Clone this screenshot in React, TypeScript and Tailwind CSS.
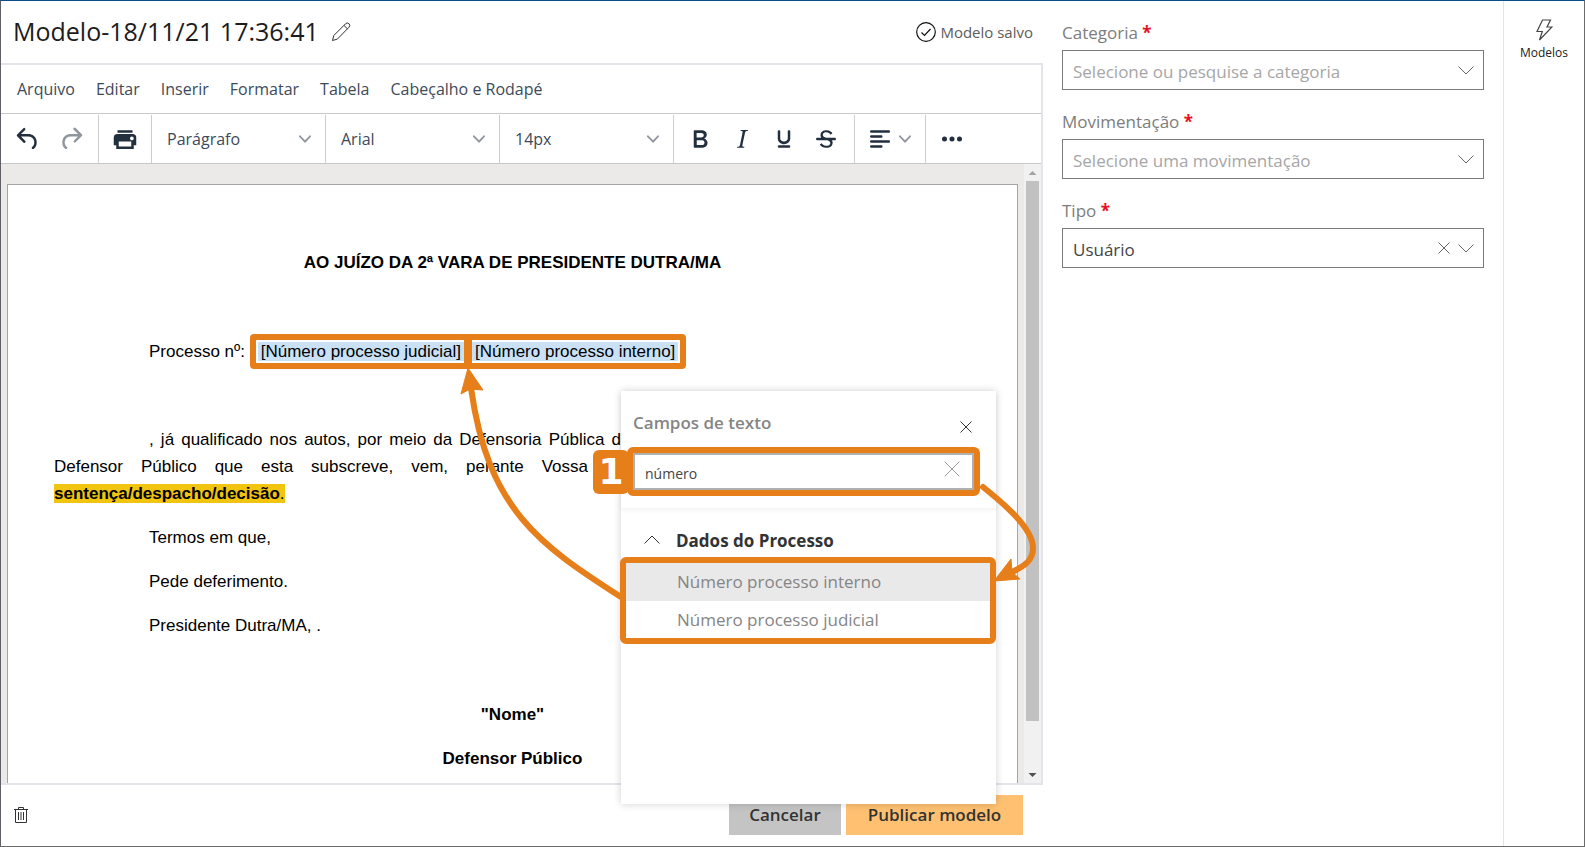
import type { ReactNode } from 'react';

const menuItems = ['Arquivo', 'Editar', 'Inserir', 'Formatar', 'Tabela', 'Cabeçalho e Rodapé'];

const icons = {
  undo: 'M6.4 8H12c3.7 0 6.2 2 6.8 5.1.6 2.7-.4 5.6-2.3 6.8a1 1 0 01-1-1.8c1.1-.6 1.8-2.7 1.4-4.6-.5-2.1-2.1-3.5-4.9-3.5H6.4l3.3 3.3a1 1 0 11-1.4 1.4l-5-5a1 1 0 010-1.4l5-5a1 1 0 011.4 1.4L6.4 8z',
  redo: 'M17.6 10H12c-2.8 0-4.4 1.4-4.9 3.5-.4 2 .3 4 1.4 4.6a1 1 0 11-1 1.8c-2-1.2-2.9-4.1-2.3-6.8.6-3 3-5.1 6.8-5.1h5.6l-3.3-3.3a1 1 0 111.4-1.4l5 5a1 1 0 010 1.4l-5 5a1 1 0 01-1.4-1.4l3.3-3.3z',
  print: 'M18 8H6a3 3 0 00-3 3v6h2v3h14v-3h2v-6a3 3 0 00-3-3zm-1 10H7v-4h10v4zm.5-5c-.8 0-1.5-.7-1.5-1.5s.7-1.5 1.5-1.5 1.5.7 1.5 1.5-.7 1.5-1.5 1.5zm.5-8H6v2h12V5z',
  bold: 'M7.8 19c-.3 0-.5 0-.6-.2l-.2-.5V5.7c0-.2 0-.4.2-.5l.6-.2h5c1.5 0 2.7.3 3.5 1 .7.6 1.1 1.4 1.1 2.5a3 3 0 01-.6 1.9c-.4.6-1 1-1.6 1.2.4.1.9.3 1.3.6s.8.7 1 1.2c.4.4.5 1 .5 1.6 0 1.3-.4 2.3-1.3 3-.8.7-2.1 1-3.8 1H7.8zm5-8.3c.6 0 1.2-.1 1.6-.5.4-.3.6-.7.6-1.3 0-1.1-.8-1.7-2.3-1.7H9.3v3.5h3.4zm.5 6c.7 0 1.3-.1 1.7-.4.4-.4.6-.9.6-1.5s-.2-1-.7-1.4c-.4-.3-1-.4-2-.4H9.4v3.8h4z',
  italic: 'M16.7 4.7l-.1.9h-.3c-.6 0-1 0-1.4.3-.3.3-.4.6-.5 1.1l-2.1 9.8v.6c0 .5.4.8 1.4.8h.2l-.2.8H8l.2-.8h.2c1.1 0 1.8-.5 2-1.5l2-9.8.1-.5c0-.6-.4-.8-1.4-.8h-.3l.2-.9h5.8z',
  underline: 'M16 5c.6 0 1 .4 1 1v5.5a4 4 0 01-.4 1.8l-1 1.4a5.3 5.3 0 01-5.5 1 5 5 0 01-1.6-1c-.5-.4-.8-.9-1.1-1.4a4 4 0 01-.4-1.8V6c0-.6.4-1 1-1s1 .4 1 1v5.5c0 .3 0 .6.2 1l.6.7a3.3 3.3 0 002.2.8 3.4 3.4 0 002.2-.8c.3-.2.4-.5.6-.8l.2-.9V6c0-.6.4-1 1-1zM8 17h8c.6 0 1 .4 1 1s-.4 1-1 1H8a1 1 0 010-2z',
  strike: 'M15.6 8.5c-.5-.7-1-1.1-1.3-1.3-.6-.4-1.3-.6-2-.6-2.7 0-2.8 1.7-2.8 2.1 0 1.6 1.8 2 3.2 2.3 4.4.9 4.6 2.8 4.6 3.9 0 1.4-.7 4.1-5 4.1A6.2 6.2 0 017 16.4l1.5-1.1c.4.6 1.6 2 3.7 2 1.6 0 2.5-.4 3-1.2.4-.8.3-2-.8-2.6-.7-.4-1.6-.7-2.9-1-1-.2-3.9-.8-3.9-3.6C7.6 6 10.3 5 12.4 5c2.9 0 4.2 1.6 4.7 2.4l-1.5 1.1zM5 11h14a1 1 0 010 2H5a1 1 0 010-2z',
  alignLeft: 'M5 5h14c.6 0 1 .4 1 1s-.4 1-1 1H5a1 1 0 110-2zm0 4h8c.6 0 1 .4 1 1s-.4 1-1 1H5a1 1 0 110-2zm0 8h8c.6 0 1 .4 1 1s-.4 1-1 1H5a1 1 0 010-2zm0-4h14c.6 0 1 .4 1 1s-.4 1-1 1H5a1 1 0 010-2z',
  more: 'M6 10a2 2 0 100 4 2 2 0 000-4zm6 0a2 2 0 100 4 2 2 0 000-4zm6 0a2 2 0 100 4 2 2 0 000-4z',
};

const Icon = ({ name }: { name: keyof typeof icons }) => (
  <svg viewBox="0 0 24 24" className="size-[30px] shrink-0" fill="currentColor">
    <path d={icons[name]} />
  </svg>
);

const ToolChevron = () => (
  <svg viewBox="0 0 10 10" className="size-3 shrink-0 text-[#8f96a0]" fill="currentColor">
    <path d="M8.7 2.2c.3-.3.8-.3 1 0 .4.4.4.9 0 1.2L5.7 7.8c-.3.3-.9.3-1.2 0L.2 3.4a.8.8 0 010-1.2c.3-.3.8-.3 1.1 0L5 6l3.7-3.8z" />
  </svg>
);

const Cross = ({ className }: { className: string }) => (
  <svg viewBox="0 0 12 12" className={className} fill="none" stroke="currentColor">
    <path d="M.5.5l11 11M11.5.5l-11 11" vectorEffect="non-scaling-stroke" />
  </svg>
);

const ToolButton = ({ name, label, className = '' }: { name: keyof typeof icons; label: string; className?: string }) => (
  <button type="button" aria-label={label} className={`flex h-12 w-[42px] items-center justify-center ${className}`}>
    <Icon name={name} />
  </button>
);

const ToolGroup = ({ children, className = '' }: { children: ReactNode; className?: string }) => (
  <div className={`flex h-12 items-center border-r border-[#cccccc] ${className}`}>{children}</div>
);

const ToolSelect = ({ label, value }: { label: string; value: string }) => (
  <div className="relative flex h-12 w-[174px] items-center border-r border-[#cccccc]">
    <select aria-label={label} className="h-full w-full appearance-none bg-transparent pl-[15px] text-base text-[#3d4a5a] outline-none">
      <option>{value}</option>
    </select>
    <span className="pointer-events-none absolute right-3.5"><ToolChevron /></span>
  </div>
);

const Field = ({ id, label, value, filled = false }: { id: string; label: string; value: string; filled?: boolean }) => (
  <div className="flex flex-col gap-[5px]">
    <label htmlFor={id} className="text-[17px] leading-6 text-[#7d7d7d]">
      {label} <span className="font-bold text-[#e81123]">*</span>
    </label>
    <div className="relative flex items-center">
      <select
        id={id}
        className={`h-10 w-full appearance-none border border-[#7a7a7a] bg-white px-2.5 pt-1 text-[17px] outline-none ${filled ? 'text-[#444444]' : 'text-[#a6a6a6]'}`}
      >
        <option>{value}</option>
      </select>
      <span className="pointer-events-none absolute right-2.5 flex items-center gap-2 text-[#666666]">
        {filled && <Cross className="size-3" />}
        <svg viewBox="0 0 16 9" className="h-[9px] w-4" fill="none" stroke="currentColor">
          <path d="M.5.5L8 8 15.5.5" />
        </svg>
      </span>
    </div>
  </div>
);

const Token = ({ children }: { children: ReactNode }) => (
  <span className="relative ml-2 bg-[#c9e0f5] px-[3px]">
    {children}
    <span className="absolute -inset-2 rounded-sm border-6 border-[#e67e1a]" />
  </span>
);

const DocumentPage = () => (
  <article className="mt-5 mr-1.5 ml-1.5 flex-1 border border-b-0 border-[#a5a5a5] bg-white px-[46px] pt-16 font-['Liberation_Sans',Arial,sans-serif] text-[17px] leading-[27px] text-black">
    <div className="flex flex-col gap-[17px]">
      <h2 className="text-center font-bold">AO JUÍZO DA 2ª VARA DE PRESIDENTE DUTRA/MA</h2>
      <div className="h-7" />
      <p className="indent-[95px] whitespace-nowrap">
        Processo nº:{' '}
        <Token>[Número processo judicial]</Token>
        <Token>[Número processo interno]</Token>
      </p>
      <div className="h-[27px]" />
      <p>
        <span className="block w-[567px] indent-[95px] [text-align-last:justify]">
          , já qualificado nos autos, por meio da Defensoria Pública d
        </span>
        <span className="block w-[534px] [text-align-last:justify]">
          Defensor Público que esta subscreve, vem, perante Vossa
        </span>
        <span className="bg-[#f1c40f]"><strong>sentença/despacho/decisão</strong>.</span>
      </p>
      <p className="indent-[95px]">Termos em que,</p>
      <p className="indent-[95px]">Pede deferimento.</p>
      <p className="indent-[95px]">Presidente Dutra/MA, .</p>
      <div className="h-7" />
      <p className="text-center font-bold">"Nome"</p>
      <p className="text-center font-bold">Defensor Público</p>
    </div>
  </article>
);

const Scrollbar = () => (
  <div className="flex w-[17px] flex-col items-center bg-[#f1f1f1]">
    <svg viewBox="0 0 17 17" className="size-[17px]" fill="#a3a3a3"><path d="M4.500 11h8L8.500 7z" /></svg>
    <div className="h-[540px] w-[13px] bg-[#c1c1c1]" />
    <svg viewBox="0 0 17 17" className="mt-auto size-[17px]" fill="#505050"><path d="M4.500 7h8l-4 4z" /></svg>
  </div>
);

const TextFieldsPanel = () => (
  <section className="absolute top-[390px] left-[620px] flex h-[413px] w-[375px] flex-col bg-white shadow-[0_0_8px_rgba(0,0,0,0.18)]">
    <div className="flex h-[117px] flex-col shadow-[0_2px_5px_rgba(0,0,0,0.06)]">
      <div className="flex h-14 items-center justify-between pr-6 pl-3">
        <h3 className="pt-2 text-[17px] font-semibold text-[#858585]">Campos de texto</h3>
        <button type="button" aria-label="Fechar" className="pt-4 text-[#333333]"><Cross className="size-3" /></button>
      </div>
      {/* Busca, com o passo 1 ao lado */}
      <div className="relative ml-1.5 h-[49px] w-[353px] rounded-md border-6 border-[#e67e1a]">
        <span className="absolute -top-[3px] -left-10 flex h-11 w-9 items-center justify-center rounded-md bg-[#e67e1a] font-['DejaVu_Sans',Verdana,sans-serif] text-[36px] font-bold text-white">1</span>
        <input
          type="text"
          aria-label="Pesquisar campos"
          defaultValue="número"
          className="h-full w-full border-2 border-[#b0b0b0] px-2.5 pt-1 text-sm text-[#444444] outline-none"
        />
        <button type="button" aria-label="Limpar" className="absolute top-2 right-3.5 text-[#999999]"><Cross className="size-4" /></button>
      </div>
    </div>
    <button type="button" className="mt-3.5 flex h-[35px] items-center gap-4 pl-[23px] text-left">
      <svg viewBox="0 0 16 9" className="h-[9px] w-4" fill="none" stroke="#333333"><path d="M.5 8.500L8 1l7.500 7.500" /></svg>
      <span className="pt-0.5 text-[17px] font-bold text-[#333333]">Dados do Processo</span>
    </button>
    <ul className="-ml-px w-[376px] rounded-md border-6 border-[#e67e1a] text-[17px] text-[#858585]">
      <li className="flex h-[38px] items-center bg-[#e9e9e9] pl-[51px]">Número processo interno</li>
      <li className="flex h-[37px] items-center pl-[51px]">Número processo judicial</li>
    </ul>
  </section>
);

const Arrows = () => (
  <svg className="pointer-events-none absolute top-0 left-0 h-[700px] w-[1060px]" viewBox="1 1 1060 700" fill="none">
    <g stroke="#e67e1a" strokeWidth="6" strokeLinecap="round">
      <path d="M621 597C540 545 488 510 471 388" />
      <path d="M983 487c20 16 50 41 50 61 0 12-8 18-21 24" />
    </g>
    <g fill="#e67e1a" stroke="#e67e1a" strokeLinejoin="round">
      <path d="M468 368l-7 26 9-5 13 1z" />
      <path d="M994 581l17-22 1 13 8 7z" />
    </g>
  </svg>
);

export default function App() {
  return (
    <div className="relative flex h-screen w-full overflow-hidden border border-t-[#0b4f8a] border-r-[#6b6b6b] border-b-[#6b6b6b] border-l-[#5f5f66] bg-white font-['Open_Sans','Segoe_UI',sans-serif]">
      <main className="flex min-w-0 flex-1 flex-col">
        <header className="flex h-[62px] items-center justify-between pr-2.5 pl-3">
          <div className="flex items-center gap-3">
            <h1 className="text-[25px] text-[#1c1c1c]">Modelo-18/11/21 17:36:41</h1>
            <button type="button" aria-label="Editar nome" className="text-[#333333]">
              <svg viewBox="0 0 20 20" className="size-5" fill="none" stroke="currentColor">
                <path d="M1.500 18.500l1.300-5L14.500 1.800a2.300 2.300 0 013.600 3.300L6.400 17.100l-4.900 1.400zM13 3.500l3.500 3.400" />
              </svg>
            </button>
          </div>
          <p className="flex items-center gap-1 text-[15px] text-[#5c5c5c]">
            <svg viewBox="0 0 20 20" className="size-5" fill="none" stroke="#111111" strokeWidth="1.200">
              <circle cx="10" cy="10" r="9.300" />
              <path d="M5.500 10.500L8.500 13.500 14.500 7" />
            </svg>
            Modelo salvo
          </p>
        </header>

        <section className="flex min-h-0 flex-1 flex-col border-t-2 border-r-2 border-b-2 border-[#e4e4ea]">
          <nav className="flex h-12 items-center gap-[21px] pl-4 text-base text-[#3d4a5a]">
            {menuItems.map(item => (
              <button key={item} type="button">{item}</button>
            ))}
          </nav>

          <div className="flex h-[51px] items-center border-y border-[#c8c8c8] text-[#222f3e]">
            <ToolGroup className="w-[98px] gap-px pl-1.5">
              <ToolButton name="undo" label="Desfazer" />
              <ToolButton name="redo" label="Refazer" className="opacity-50" />
            </ToolGroup>
            <ToolGroup className="w-[53px] justify-center">
              <ToolButton name="print" label="Imprimir" />
            </ToolGroup>
            <ToolSelect label="Bloco" value="Parágrafo" />
            <ToolSelect label="Fonte" value="Arial" />
            <ToolSelect label="Tamanho" value="14px" />
            <ToolGroup className="w-[181px] pl-[5px]">
              <ToolButton name="bold" label="Negrito" />
              <ToolButton name="italic" label="Itálico" />
              <ToolButton name="underline" label="Sublinhado" />
              <ToolButton name="strike" label="Tachado" />
            </ToolGroup>
            <ToolGroup className="w-[71px] pl-2.5">
              <button type="button" aria-label="Alinhamento" className="flex items-center gap-1">
                <Icon name="alignLeft" />
                <ToolChevron />
              </button>
            </ToolGroup>
            <ToolButton name="more" label="Mais" className="ml-[5px]" />
          </div>

          <div className="flex min-h-0 flex-1 overflow-hidden bg-[#ebeae9]">
            <DocumentPage />
            <Scrollbar />
          </div>
        </section>

        <footer className="flex h-[61px] items-center justify-between pr-5 pb-0.5 pl-3">
          <button type="button" aria-label="Excluir" className="text-[#333333]">
            <svg viewBox="0 0 16 18" className="h-[18px] w-4" fill="none" stroke="currentColor">
              <path d="M1 3.500h14M5.500 3V1.500h5V3M2.500 3.500v13h11v-13M5.500 6v8M8 6v8M10.500 6v8" />
            </svg>
          </button>
          <div className="flex gap-[5px] text-[17px] font-semibold text-[#333333]">
            <button type="button" className="h-10 w-28 bg-[#c4c4c4]">Cancelar</button>
            <button type="button" className="h-10 w-[177px] bg-[#ffc171]">Publicar modelo</button>
          </div>
        </footer>
      </main>

      <aside className="flex w-[460px] flex-col gap-5 px-[19px] pt-5">
        <Field id="categoria" label="Categoria" value="Selecione ou pesquise a categoria" />
        <Field id="movimentacao" label="Movimentação" value="Selecione uma movimentação" />
        <Field id="tipo" label="Tipo" value="Usuário" filled />
      </aside>

      <nav className="flex w-[81px] flex-col items-center border-l border-[#e4e4e4] pt-[18px]">
        <a href="#modelos" className="flex flex-col items-center gap-1 text-xs text-[#222222]">
          <svg viewBox="0 0 17 22" className="h-[22px] w-[17px]" fill="none" stroke="#444444" strokeWidth="1.200">
            <path d="M6.500 1h8l-3.500 7h5L3.500 21l2.800-8.500H1z" />
          </svg>
          Modelos
        </a>
      </nav>

      <TextFieldsPanel />
      <Arrows />
    </div>
  );
}
